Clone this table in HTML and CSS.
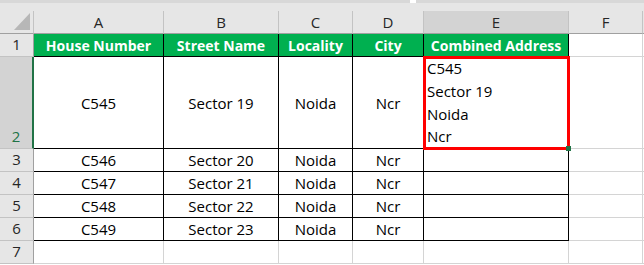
FILE: index.html
```html
<!DOCTYPE html>
<html>
<head>
<meta charset="utf-8">
<link rel="stylesheet" href="styles.css">
</head>
<body>
<div class="sheet">
  <div class="topband"><div class="topline a"></div><div class="topgap"></div><div class="topline b"></div></div>
  <div class="grid">
    <div class="corner"><svg width="16" height="17" viewBox="0 0 16 17"><polygon points="16,0 16,17 0,17" fill="#b7b7b7"/></svg></div>
    <div class="ch">A</div>
    <div class="ch">B</div>
    <div class="ch">C</div>
    <div class="ch">D</div>
    <div class="ch sel">E</div>
    <div class="ch">F</div>
    <div class="ch last"></div>

    <div class="rh">1</div>
    <div class="c hd">House Number</div>
    <div class="c hd">Street Name</div>
    <div class="c hd">Locality</div>
    <div class="c hd">City</div>
    <div class="c hd">Combined Address</div>
    <div class="c g"></div>
    <div class="c g"></div>

    <div class="rh sel">2</div>
    <div class="c d">C545</div>
    <div class="c d">Sector 19</div>
    <div class="c d">Noida</div>
    <div class="c d">Ncr</div>
    <div class="c d wrap">C545<br>Sector 19<br>Noida<br>Ncr<span class="handle"></span></div>
    <div class="c g"></div>
    <div class="c g"></div>

    <div class="rh">3</div>
    <div class="c d">C546</div>
    <div class="c d">Sector 20</div>
    <div class="c d">Noida</div>
    <div class="c d">Ncr</div>
    <div class="c d"></div>
    <div class="c g"></div>
    <div class="c g"></div>

    <div class="rh">4</div>
    <div class="c d">C547</div>
    <div class="c d">Sector 21</div>
    <div class="c d">Noida</div>
    <div class="c d">Ncr</div>
    <div class="c d"></div>
    <div class="c g"></div>
    <div class="c g"></div>

    <div class="rh">5</div>
    <div class="c d">C548</div>
    <div class="c d">Sector 22</div>
    <div class="c d">Noida</div>
    <div class="c d">Ncr</div>
    <div class="c d"></div>
    <div class="c g"></div>
    <div class="c g"></div>

    <div class="rh">6</div>
    <div class="c d">C549</div>
    <div class="c d">Sector 23</div>
    <div class="c d">Noida</div>
    <div class="c d">Ncr</div>
    <div class="c d"></div>
    <div class="c g"></div>
    <div class="c g"></div>

    <div class="rh">7</div>
    <div class="c g"></div>
    <div class="c g"></div>
    <div class="c g"></div>
    <div class="c g"></div>
    <div class="c g"></div>
    <div class="c g"></div>
    <div class="c g"></div>
  </div>
</div>
</body>
</html>
```

FILE: styles.css
```css
* { box-sizing: border-box; }
html, body { margin: 0; padding: 0; background: #ffffff; }
body { width: 644px; height: 265px; overflow: hidden; font-family: "Open Sans", "Liberation Sans", sans-serif; font-size: 15px; color: #000; }

.sheet { width: 644px; }

.topband { height: 11px; background: #e6e6e6; display: flex; align-items: flex-start; }
.topline { height: 3px; background: #d8d8d8; }
.topline.a { width: 410px; }
.topgap { width: 6px; height: 3px; background: #ffffff; }
.topline.b { flex: 1; }

.grid {
  display: grid;
  grid-template-columns: 34px 130px 115px 74px 71px 145px 74px 10px;
  grid-template-rows: 23px 23px 92px 23px 23px 23px 23px 23px;
}

.corner {
  background: #e6e6e6;
  border-right: 1px solid #c3c3c3;
  border-bottom: 1px solid #a0a0a0;
  display: flex;
  align-items: flex-end;
  justify-content: flex-end;
  padding: 0 3px 3px 0;
}
.corner svg { display: block; }

.ch {
  background: #e6e6e6;
  border-right: 1px solid #c3c3c3;
  border-bottom: 1px solid #a0a0a0;
  display: flex;
  align-items: center;
  justify-content: center;
  color: #262626;
  font-size: 15px;
}
.ch.sel { background: #d3d3d3; }
.ch.last { border-right: none; }

.rh {
  background: #e6e6e6;
  border-right: 1px solid #a0a0a0;
  border-bottom: 1px solid #c3c3c3;
  display: flex;
  align-items: flex-end;
  justify-content: center;
  padding-bottom: 1px;
  color: #262626;
  font-size: 15px;
  line-height: 21px;
}
.rh.sel { background: #d3d3d3; border-right: 2px solid #217346; color: #217346; }

.c {
  border-right: 1px solid #d4d4d4;
  border-bottom: 1px solid #d4d4d4;
  display: flex;
  align-items: center;
  justify-content: center;
  white-space: nowrap;
}

.hd {
  background: #00b050;
  color: #ffffff;
  font-weight: 700;
  font-size: 14px;
  border-right: 1px solid #000;
  border-bottom: 1px solid #000;
}

.d {
  border-right: 1px solid #000;
  border-bottom: 1px solid #000;
}

.wrap {
  position: relative;
  display: block;
  text-align: left;
  padding-left: 3px;
  line-height: 22.75px;
}
.wrap::after {
  content: "";
  position: absolute;
  left: -1px;
  top: -1px;
  right: -2px;
  bottom: -2px;
  border: 3px solid #ff0000;
}
.handle {
  position: absolute;
  right: -3px;
  bottom: -3px;
  width: 5px;
  height: 5px;
  background: #217346;
  z-index: 2;
}
```
